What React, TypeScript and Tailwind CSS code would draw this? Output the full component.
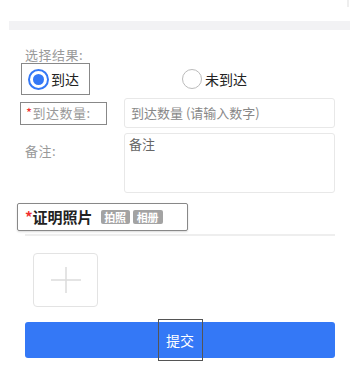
import React from 'react';

const font = { fontFamily: '"Noto Sans CJK SC", "Noto Sans", sans-serif' };

export default function App(): JSX.Element {
    return (
        <div
            className="w-[353px] h-[384px] bg-white flex flex-col overflow-hidden"
            style={font}
        >
            {/* top strip */}
            <div className="h-[21px] flex justify-end pr-[4px]">
                <div className="w-[2px] h-[7px] border-x border-[#eee]"></div>
            </div>
            <div className="h-[9px] ml-[9px] mr-[3px] bg-[#f2f2f4]"></div>

            <div className="mt-[16px] pl-[25px] text-[13px] leading-[17px] tracking-[0.5px] text-[#999]">
                选择结果:
            </div>

            {/* radios */}
            <div className="flex items-center h-[32px]">
                <div className="ml-[21px] w-[69px] h-[32px] border border-[#888] flex items-center pl-[6px] gap-[2px]">
                    <span className="w-[21px] h-[21px] rounded-full border-2 border-[#3478f6] flex items-center justify-center">
                        <span className="w-[11px] h-[11px] rounded-full bg-[#3478f6]"></span>
                    </span>
                    <span className="text-[14px] text-[#222]">到达</span>
                </div>
                <div className="ml-[92px] flex items-center gap-[3px]">
                    <span className="w-[20px] h-[20px] rounded-full border border-[#bbb]"></span>
                    <span className="text-[14px] text-[#222]">未到达</span>
                </div>
            </div>

            {/* quantity */}
            <div className="mt-[3px] flex items-center h-[30px]">
                <div className="ml-[20px] w-[87px] h-[23px] border border-[#888] flex items-center pl-[5px] text-[13px] tracking-[0.5px] text-[#999]">
                    <span className="text-[#f03030]">*</span>到达数量:
                </div>
                <div className="ml-[17px] w-[211px] h-[30px] border border-[#e8e8e8] rounded-[3px] flex items-center pl-[6px] text-[13px] text-[#888]">
                    到达数量 (请输入数字)
                </div>
            </div>

            {/* remark */}
            <div className="mt-[5px] flex h-[60px]">
                <div className="ml-[25px] w-[99px] pt-[8px] text-[13px] tracking-[0.5px] text-[#999]">
                    备注:
                </div>
                <div className="w-[211px] h-[60px] border border-[#e8e8e8] rounded-[3px] pl-[4px] pt-[1px] text-[13px] leading-[18px] text-[#666]">
                    备注
                </div>
            </div>

            {/* photo label */}
            <div className="mt-[10px] ml-[17px] w-[171px] h-[28px] border border-[#888] rounded-[2px] shadow-[0_1px_2px_rgba(0,0,0,0.15)] flex items-center pl-[7px]">
                <span className="text-[15px] font-bold text-[#222]">
                    <span className="text-[#f03030]">*</span>证明照片
                </span>
                <span className="ml-[8px] w-[29px] h-[14px] rounded-[2px] bg-[#a3a3a3] text-white text-[11px] leading-[14px] font-bold text-center">
                    拍照
                </span>
                <span className="ml-[3px] w-[30px] h-[14px] rounded-[2px] bg-[#a3a3a3] text-white text-[11px] leading-[14px] font-bold text-center">
                    相册
                </span>
            </div>
            <div className="mt-[3px] ml-[25px] w-[310px] h-[2px] bg-[#eeeeee]"></div>

            {/* upload */}
            <div className="mt-[17px] ml-[33px] w-[65px] h-[54px] border border-[#e3e3e3] rounded-[4px] flex items-center justify-center">
                <svg width="34" height="30" viewBox="0 0 34 30">
                    <path d="M17 2 V28 M2 15 H32" stroke="#dcdcdc" strokeWidth="1.5" fill="none" />
                </svg>
            </div>

            {/* submit */}
            <div className="mt-[15px] ml-[25px] w-[310px] h-[36px] rounded-[3px] bg-[#3478f6] flex items-center justify-center">
                <span className="w-[45px] h-[42px] border border-[#555] flex items-center justify-center text-[14px] text-white">
                    提交
                </span>
            </div>
        </div>
    );
}
